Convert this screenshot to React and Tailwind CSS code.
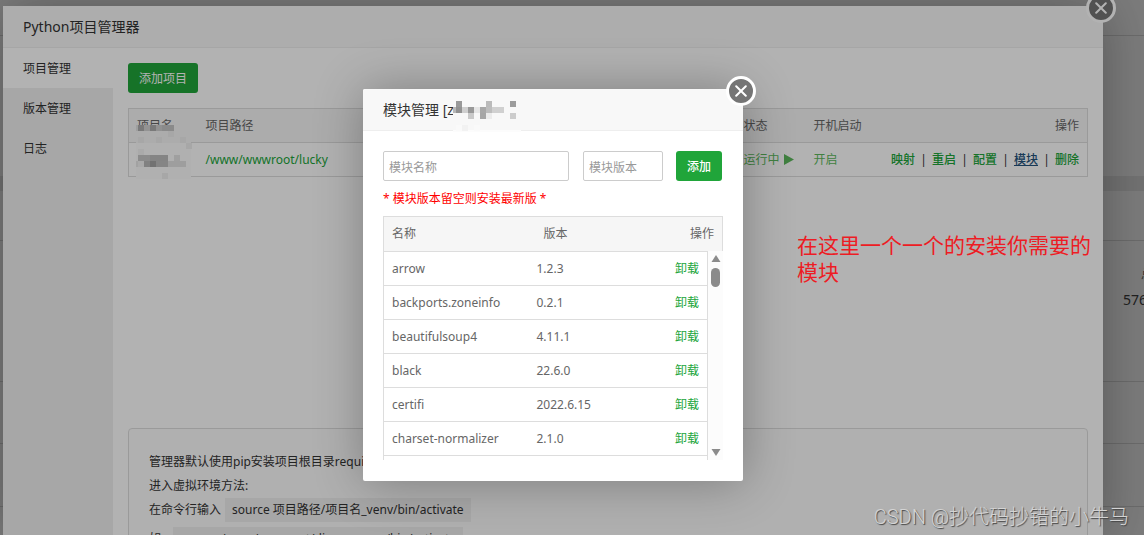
import React, { useState } from 'react';

const modules = [
  { name: 'arrow', version: '1.2.3' },
  { name: 'backports.zoneinfo', version: '0.2.1' },
  { name: 'beautifulsoup4', version: '4.11.1' },
  { name: 'black', version: '22.6.0' },
  { name: 'certifi', version: '2022.6.15' },
  { name: 'charset-normalizer', version: '2.1.0' },
];

const tabs = ['项目管理', '版本管理', '日志'];
const actions = ['映射', '重启', '配置', '模块', '删除'];

// [x, y, width, color], every block is 6px high
const nameBlocks = [
  [0, 0, 2, '#e3e3e3'], [2, 0, 6, '#aeaeae'], [8, 0, 6, '#d3d3d3'], [14, 0, 6, '#aeaeae'], [20, 0, 6, '#d0d0d0'], [26, 0, 12, '#c6c6c6'],
  [32, 6, 6, '#efefef'], [2, 12, 6, '#efefef'], [20, 12, 6, '#efefef'], [44, 12, 6, '#efefef'], [50, 18, 6, '#efefef'],
  [2, 24, 6, '#f4f4f4'], [2, 30, 12, '#c8c8c8'], [14, 30, 18, '#bdbdbd'], [38, 30, 6, '#e4e4e4'],
  [0, 36, 2, '#e8e8e8'], [2, 36, 6, '#f2f2f2'], [8, 36, 6, '#b9b9b9'], [14, 36, 6, '#a4a4a4'], [20, 36, 12, '#bfbfbf'], [32, 36, 18, '#e3e3e3'],
  [26, 48, 6, '#f0f0f0'],
];

const titleBlocks = [
  [3, 0, 6, '#999999'], [33, 0, 6, '#bbbbbb'], [57, 0, 6, '#9c9c9c'],
  [0, 6, 3, '#b8b8b8'], [3, 6, 6, '#929292'], [9, 6, 6, '#cfcfcf'], [15, 6, 6, '#999999'], [21, 6, 6, '#e6e6e6'],
  [27, 6, 6, '#a8a8a8'], [33, 6, 6, '#bdbdbd'], [39, 6, 12, '#d0d0d0'],
  [15, 12, 6, '#c9c9c9'], [27, 12, 6, '#a6a6a6'], [33, 12, 6, '#ebebeb'], [57, 12, 6, '#cccccc'],
  [3, 24, 6, '#fafafa'], [9, 24, 6, '#f2f2f2'], [21, 24, 6, '#fafafa'],
];

const Blocks = ({ data }) =>
  data.map(([x, y, w, fill], i) => <rect key={i} x={x} y={y} width={w} height="6" fill={fill} />);

const CloseButton = () => (
  <button
    aria-label="关闭"
    className="absolute -top-[13px] -right-[13px] z-10 flex h-[30px] w-[30px] items-center justify-center rounded-full border-[3px] border-white bg-[#757575]"
  >
    <svg width="12" height="12" viewBox="0 0 12 12" stroke="#fff" strokeWidth="2" strokeLinecap="round">
      <path d="M1.2 1.2 10.8 10.8M10.8 1.2 1.2 10.8" />
    </svg>
  </button>
);

// Panel home page, mostly hidden by the dialogs
const Background = () => (
  <div className="flex h-screen flex-col bg-white text-[#666]">
    <div className="h-9 shrink-0 border-b border-[#ddd]" />
    <div className="h-[140px] shrink-0" />
    <div className="h-[15px] shrink-0 bg-[#ebebeb]" />
    <div className="h-[50px] shrink-0 border-b border-[#ddd]" />
    <div className="flex h-[141px] shrink-0 justify-end overflow-hidden border-b border-[#ddd] pt-6">
      <div className="-mr-[22px] w-[43px] shrink-0 whitespace-nowrap">
        <p className="pl-[18px] text-xs leading-5">总数</p>
        <p className="text-sm leading-[30px] text-[#444]">57659</p>
      </div>
    </div>
    <div className="h-[62px] shrink-0 border-b border-[#ddd]" />
    <div className="h-[63px] shrink-0 border-b border-[#ddd]" />
  </div>
);

const ProjectDialog = () => {
  const [activeTab, setActiveTab] = useState(0);

  return (
    <section className="relative flex flex-1 flex-col bg-white shadow-[1px_1px_50px_rgba(0,0,0,0.3)]">
      <CloseButton />
      <h1 className="h-[42px] shrink-0 border-b border-[#eee] bg-[#f8f8f8] px-5 text-sm leading-[41px] text-[#333]">
        Python项目管理器
      </h1>
      <div className="flex min-h-0 flex-1">
        <nav className="flex w-[110px] shrink-0 flex-col bg-[#f0f0f0]">
          {tabs.map((tab, i) => (
            <button
              key={tab}
              onClick={() => setActiveTab(i)}
              className={`h-10 pt-[2px] pl-5 text-left ${activeTab === i ? 'bg-white' : ''}`}
            >
              {tab}
            </button>
          ))}
        </nav>
        <div className="flex min-w-0 flex-1 flex-col overflow-hidden p-[15px]">
          <button className="h-[30px] w-[70px] shrink-0 rounded-[3px] bg-[#20a53a] pt-[2px] text-white">添加项目</button>

          <div className="mt-[15px] min-h-[320px]">
            <table className="w-full table-fixed border-collapse border border-[#ddd]">
              <colgroup>
                <col className="w-[69px]" />
                <col />
                <col className="w-[70px]" />
                <col className="w-[74px]" />
                <col className="w-[208px]" />
              </colgroup>
              <thead className="bg-[#f6f6f6] text-left text-[#666]">
                <tr className="h-[34px] border-b border-[#ddd]">
                  <th className="relative px-2 font-normal">
                    项目名
                    <svg className="absolute top-4 left-[7px]" width="56" height="54">
                      <rect width="55" height="18" fill="#f7f7f7" />
                      <rect y="18" width="55" height="36" fill="#fdfdfd" />
                      <Blocks data={nameBlocks} />
                    </svg>
                  </th>
                  <th className="px-2 font-normal">项目路径</th>
                  <th className="px-2 font-normal">状态</th>
                  <th className="px-2 font-normal">开机启动</th>
                  <th className="px-2 text-right font-normal">操作</th>
                </tr>
              </thead>
              <tbody>
                <tr className="h-[34px]">
                  <td />
                  <td className="px-2">
                    <a href="#path" className="text-[#20a53a]">/www/wwwroot/lucky</a>
                  </td>
                  <td className="px-2 whitespace-nowrap">
                    <a href="#status" className="flex items-center gap-1 text-[#5cb85c]">
                      运行中
                      <svg width="10" height="11" viewBox="0 0 10 11" fill="currentColor" className="shrink-0">
                        <path d="M0 0 10 5.5 0 11z" />
                      </svg>
                    </a>
                  </td>
                  <td className="px-2">
                    <a href="#boot" className="text-[#5cb85c]">开启</a>
                  </td>
                  <td className="px-2">
                    <div className="flex justify-end">
                      {actions.map((action, i) => (
                        <span key={action} className="flex">
                          {i > 0 && <span className="w-[17px] text-center">|</span>}
                          <a
                            href="#action"
                            className={action === '模块' ? 'font-medium text-[#23527c] underline' : 'font-medium text-[#20a53a]'}
                          >
                            {action}
                          </a>
                        </span>
                      ))}
                    </div>
                  </td>
                </tr>
              </tbody>
            </table>
          </div>

          <div className="shrink-0 rounded border border-[#ddd] bg-[#fcfcfc] px-5 pt-[21px] pb-5 leading-6 text-[#333]">
            <p>管理器默认使用pip安装项目根目录requirements.txt内的模块</p>
            <p>进入虚拟环境方法:</p>
            <p className="mb-[5px] flex">
              在命令行输入
              <code className="ml-1 bg-[#f0f0f0] px-[7px] font-[inherit]">source 项目路径/项目名_venv/bin/activate</code>
            </p>
            <p className="flex">
              如:
              <code className="ml-[9px] bg-[#f0f0f0] px-[7px] font-[inherit]">source /www/wwwroot/django_venv/bin/activate</code>
            </p>
          </div>
        </div>
      </div>
    </section>
  );
};

const ModuleDialog = () => {
  const [name, setName] = useState('');
  const [version, setVersion] = useState('');

  return (
    <section className="relative w-[380px] rounded-[2px] bg-white pb-[21px] shadow-[1px_1px_50px_rgba(0,0,0,0.3)]">
      <CloseButton />
      <h2 className="relative h-[42px] rounded-t-[2px] border-b border-[#eee] bg-[#f8f8f8] px-5 text-sm leading-[41px] text-[#333]">
        模块管理 [z
        <svg className="absolute top-3 left-[90px]" width="68" height="31">
          <rect width="68" height="31" fill="#f8f8f8" />
          <rect y="29" width="68" height="2" fill="#fcfcfc" />
          <Blocks data={titleBlocks} />
        </svg>
      </h2>
      <div className="px-5 pt-5">
        <div className="flex pr-px">
          <input
            aria-label="模块名称"
            placeholder="模块名称"
            value={name}
            onChange={(e) => setName(e.target.value)}
            className="h-[30px] min-w-0 flex-1 rounded-[2px] border border-[#ccc] px-[5px] pt-[2px] placeholder:text-[#999]"
          />
          <input
            aria-label="模块版本"
            placeholder="模块版本"
            value={version}
            onChange={(e) => setVersion(e.target.value)}
            className="ml-[14px] h-[30px] w-20 rounded-[2px] border border-[#ccc] px-[5px] pt-[2px] placeholder:text-[#999]"
          />
          <button className="ml-[13px] h-[30px] w-[46px] rounded-[3px] bg-[#20a53a] pt-[2px] font-medium text-white">添加</button>
        </div>
        <p className="h-[35px] leading-[35px] text-[#f00]">* 模块版本留空则安装最新版 *</p>

        <table className="w-full table-fixed text-[#666]">
          <thead>
            <tr className="h-[34px] border border-b-0 border-[#ddd] bg-[#f6f6f6] text-left">
              <th className="w-[152px] px-2 font-normal">名称</th>
              <th className="px-2 font-normal">版本</th>
              <th className="px-2 text-right font-normal">操作</th>
            </tr>
          </thead>
        </table>
        <div className="flex h-[209px] overflow-hidden">
          <div className="flex-1">
            <table className="w-full table-fixed border-collapse border border-[#ddd] text-[#666]">
              <tbody>
                {modules.map((item) => (
                  <tr key={item.name} className="h-[34px] border-b border-[#ddd]">
                    <td className="w-[145px] px-2 pt-[2px] whitespace-nowrap">{item.name}</td>
                    <td className="px-2 pt-[2px]">{item.version}</td>
                    <td className="px-2 pt-[2px] text-right">
                      <a href="#remove" className="text-[#20a53a]">卸载</a>
                    </td>
                  </tr>
                ))}
                <tr className="h-[34px]"><td /></tr>
              </tbody>
            </table>
          </div>
          {/* Scrollbar */}
          <div className="flex w-[15px] flex-col items-center bg-[#fcfcfc] py-1">
            <svg width="10" height="7" fill="#8b8b8b"><path d="M5 0 9.5 7h-9z" /></svg>
            <div className="mt-[6px] h-[19px] w-[9px] rounded-full bg-[#8b8b8b]" />
            <svg className="mt-auto" width="10" height="7" fill="#8b8b8b"><path d="M5 7 9.5 0h-9z" /></svg>
          </div>
        </div>
      </div>
    </section>
  );
};

const App = () => {
  return (
    <div className="relative h-screen overflow-hidden font-['Noto_Sans','Noto_Sans_CJK_SC',sans-serif] text-xs text-[#333]">
      <Background />
      <div className="absolute inset-0 z-10 flex bg-black/30 pt-[6px] pr-[41px] pl-[3px]">
        <ProjectDialog />
      </div>
      <div className="absolute inset-0 z-20 flex items-start justify-center bg-black/30 pt-[89px] pr-[41px] pl-[3px]">
        <ModuleDialog />
      </div>

      {/* Notes drawn over the page */}
      <p className="absolute top-[232px] right-[50px] z-30 w-[297px] text-[21px] leading-[27px] text-[#ed1c24]">
        在这里一个一个的安装你需要的模块
      </p>
      <p className="absolute right-[15px] bottom-1 z-30 font-['Roboto','Noto_Sans_CJK_SC',sans-serif] text-xl leading-7 font-light text-[#d4d4d4] [text-shadow:1px_1px_1px_#444]">
        CSDN @抄代码抄错的小牛马
      </p>
    </div>
  );
};

export default App;
